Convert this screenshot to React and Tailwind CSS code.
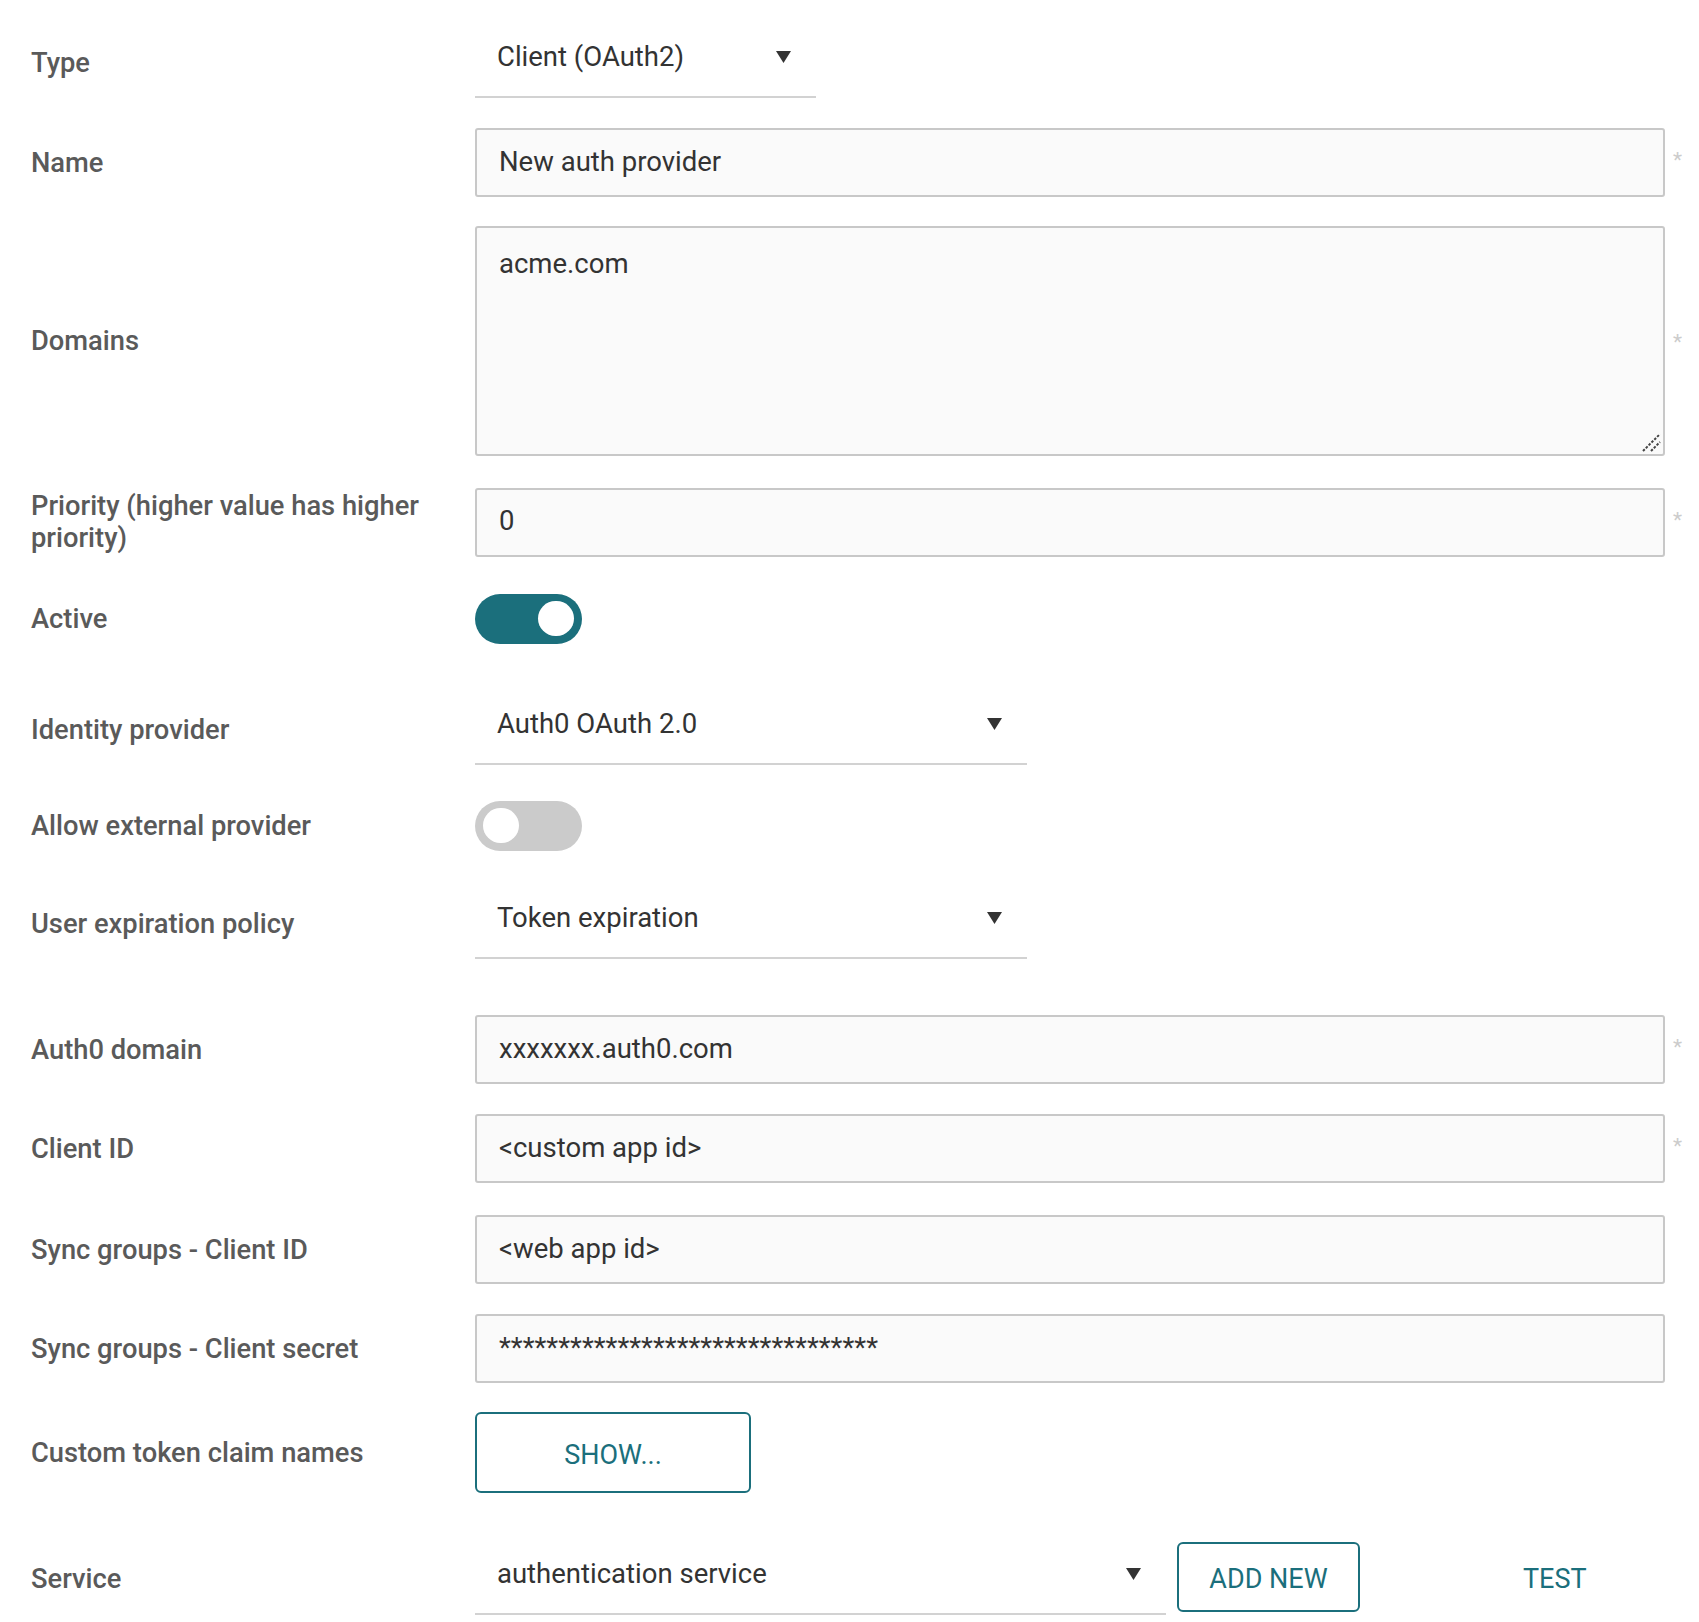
import { useState } from "react";

const labelCls = "w-[444px] shrink-0 pr-[20px] text-[27.3px] leading-[32px] font-medium text-[#5a5a5a]";

function Star({ top = "mt-[22px]" }) {
  return <span className={`ml-[8px] w-[12px] self-start ${top} text-[21px] leading-none text-[#cccccc]`}>*</span>;
}

function Arrow() {
  return (
    <svg width="15" height="12" viewBox="0 0 15 12" className="shrink-0">
      <path d="M0 0 L15 0 L7.5 12 Z" fill="#333" />
    </svg>
  );
}

function Select({ value, width, mt = "" }) {
  return (
    <div
      className={`flex h-[70px] items-center justify-between border-b-2 border-[#d2d2d2] pb-[10px] pl-[22px] pr-[25px] text-[27.5px] text-[#333] ${width} ${mt}`}
    >
      <span>{value}</span>
      <Arrow />
    </div>
  );
}

function TextInput({ value, required }) {
  return (
    <div className="flex items-center">
      <div className="flex h-[69px] w-[1190px] items-center rounded-[3px] border-2 border-[#c8c8c8] bg-[#fafafa] pb-[2px] pl-[22px] text-[27.5px] text-[#333]">
        <span>{value}</span>
      </div>
      {required && <Star />}
    </div>
  );
}

function Toggle({ on, onChange }) {
  return (
    <button
      type="button"
      onClick={() => onChange(!on)}
      className={`flex h-[50px] w-[107px] items-center rounded-full px-[8px] ${
        on ? "justify-end bg-[#1b6f7c]" : "justify-start bg-[#cbcbcb]"
      }`}
    >
      <span className="block h-[35px] w-[36px] rounded-full bg-white" />
    </button>
  );
}

export default function App() {
  const [active, setActive] = useState(true);
  const [external, setExternal] = useState(false);

  return (
    <div className="min-h-[1622px] bg-white pl-[31px] font-['Roboto',sans-serif]">
      {/* Type */}
      <div className="flex h-[70px] items-center pt-[28px] box-content">
        <div className={labelCls}>Type</div>
        <Select value="Client (OAuth2)" width="w-[341px]" />
      </div>

      {/* Name */}
      <div className="mt-[30px] flex h-[69px] items-center">
        <div className={labelCls}>Name</div>
        <TextInput value="New auth provider" required />
      </div>

      {/* Domains */}
      <div className="mt-[29px] flex h-[230px] items-center">
        <div className={labelCls}>Domains</div>
        <div className="flex h-full items-center">
          <div className="relative">
            <textarea
              readOnly
              defaultValue="acme.com"
              className="block h-[230px] w-[1190px] resize-none rounded-[3px] border-2 border-[#c8c8c8] bg-[#fafafa] pl-[22px] pt-[20px] text-[27.5px] leading-[32px] text-[#333] outline-none"
            />
            {/* resize grip */}
            <svg width="22" height="22" viewBox="0 0 22 22" className="absolute bottom-[3px] right-[3px]">
              <line x1="3" y1="20" x2="20" y2="3" stroke="#444" strokeWidth="2" strokeDasharray="2.5 1.5" />
              <line x1="11" y1="20" x2="20" y2="11" stroke="#444" strokeWidth="2" strokeDasharray="2.5 1.5" />
            </svg>
          </div>
          <Star top="mt-[106px]" />
        </div>
      </div>

      {/* Priority */}
      <div className="mt-[31px] flex h-[70px] items-center">
        <div className={labelCls}>Priority (higher value has higher priority)</div>
        <TextInput value="0" required />
      </div>

      {/* Active */}
      <div className="mt-[27px] flex h-[69px] items-center">
        <div className={labelCls}>Active</div>
        <Toggle on={active} onChange={setActive} />
      </div>

      {/* Identity provider */}
      <div className="mt-[42px] flex h-[70px] items-center">
        <div className={labelCls}>Identity provider</div>
        <Select value="Auth0 OAuth 2.0" width="w-[552px]" />
      </div>

      {/* Allow external provider */}
      <div className="mt-[26px] flex h-[69px] items-center">
        <div className={labelCls}>Allow external provider</div>
        <Toggle on={external} onChange={setExternal} />
      </div>

      {/* User expiration policy */}
      <div className="mt-[29px] flex h-[70px] items-center">
        <div className={labelCls}>User expiration policy</div>
        <Select value="Token expiration" width="w-[552px]" />
      </div>

      <div className="mt-[56px] flex h-[69px] items-center">
        <div className={labelCls}>Auth0 domain</div>
        <TextInput value="xxxxxxx.auth0.com" required />
      </div>

      <div className="mt-[30px] flex h-[69px] items-center">
        <div className={labelCls}>Client ID</div>
        <TextInput value="<custom app id>" required />
      </div>

      <div className="mt-[32px] flex h-[69px] items-center">
        <div className={labelCls}>Sync groups - Client ID</div>
        <TextInput value="<web app id>" />
      </div>

      <div className="mt-[30px] flex h-[69px] items-center">
        <div className={labelCls}>Sync groups - Client secret</div>
        <TextInput value="********************************" />
      </div>

      {/* Custom token claim names */}
      <div className="mt-[29px] flex h-[81px] items-center">
        <div className={labelCls}>Custom token claim names</div>
        <button
          type="button"
          className="h-[81px] w-[276px] rounded-[6px] border-2 border-[#1b6f7c] pt-[5px] text-[27px] text-[#1b6f7c]"
        >
          SHOW...
        </button>
      </div>

      {/* Service */}
      <div className="mt-[49px] flex h-[73px] items-center">
        <div className={labelCls}>Service</div>
        <div className="flex h-full items-start">
          <Select value="authentication service" width="w-[691px]" mt="mt-[3px]" />
          <button
            type="button"
            className="ml-[11px] h-[70px] w-[183px] rounded-[6px] border-2 border-[#1b6f7c] pt-[4px] text-[27px] text-[#1b6f7c]"
          >
            ADD NEW
          </button>
          <button type="button" className="ml-[163px] mt-[17px] text-[27px] text-[#1b6f7c]">
            TEST
          </button>
        </div>
      </div>
    </div>
  );
}
